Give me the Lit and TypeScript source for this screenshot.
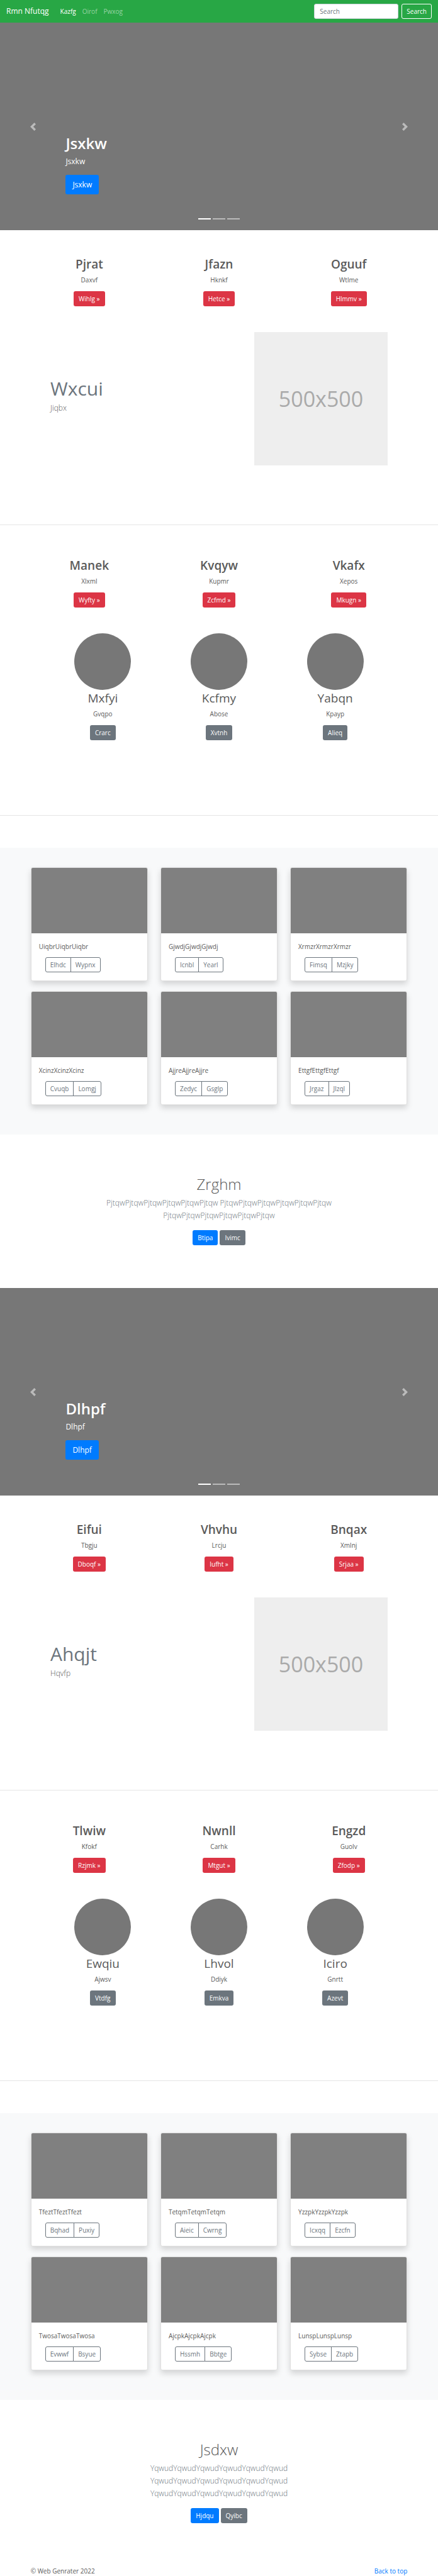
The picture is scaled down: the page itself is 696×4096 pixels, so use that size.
import { LitElement, html, css } from "lit";
import { customElement } from "lit/decorators.js";

interface Blurb {
  title: string;
  text: string;
  action: string;
}

interface Card {
  text: string;
  actions: [string, string];
}

interface Section {
  slide: string;
  features: Blurb[];
  featurette: { title: string; text: string };
  highlights: Blurb[];
  people: Blurb[];
  cards: Card[];
  callout: { title: string; text: string; primary: string; secondary: string };
}

const blurb = (title: string, text: string, action: string): Blurb => ({ title, text, action });
const card = (word: string, first: string, second: string): Card => ({
  text: word.repeat(3),
  actions: [first, second],
});
const passage = (word: string) => Array(3).fill(word.repeat(6)).join(" ");

const sections: Section[] = [
  {
    slide: "Jsxkw",
    features: [
      blurb("Pjrat", "Daxvf", "Wihlg »"),
      blurb("Jfazn", "Hknkf", "Hetce »"),
      blurb("Oguuf", "Wtlme", "Hlmmv »"),
    ],
    featurette: { title: "Wxcui", text: "Jiqbx" },
    highlights: [
      blurb("Manek", "Xlxml", "Wyfty »"),
      blurb("Kvqyw", "Kupmr", "Zcfmd »"),
      blurb("Vkafx", "Xepos", "Mkugn »"),
    ],
    people: [
      blurb("Mxfyi", "Gvqpo", "Crarc"),
      blurb("Kcfmy", "Abose", "Xvtnh"),
      blurb("Yabqn", "Kpayp", "Alieq"),
    ],
    cards: [
      card("Uiqbr", "Elhdc", "Wypnx"),
      card("Gjwdj", "Icnbl", "Yearl"),
      card("Xrmzr", "Fimsq", "Mzjky"),
      card("Xcinz", "Cvuqb", "Lomgj"),
      card("Ajjre", "Zedyc", "Gsglp"),
      card("Ettgf", "Jrgaz", "Jlzql"),
    ],
    callout: { title: "Zrghm", text: passage("Pjtqw"), primary: "Btipa", secondary: "Ivimc" },
  },
  {
    slide: "Dlhpf",
    features: [
      blurb("Eifui", "Tbgju", "Dboqf »"),
      blurb("Vhvhu", "Lrcju", "Iufht »"),
      blurb("Bnqax", "Xmlnj", "Srjaa »"),
    ],
    featurette: { title: "Ahqjt", text: "Hqvfp" },
    highlights: [
      blurb("Tlwiw", "Kfokf", "Rzjmk »"),
      blurb("Nwnll", "Carhk", "Mtgut »"),
      blurb("Engzd", "Guolv", "Zfodp »"),
    ],
    people: [
      blurb("Ewqiu", "Ajwsv", "Vtdfg"),
      blurb("Lhvol", "Ddiyk", "Emkva"),
      blurb("Iciro", "Gnrtt", "Azevt"),
    ],
    cards: [
      card("Tfezt", "Bqhad", "Puxiy"),
      card("Tetqm", "Aieic", "Cwrng"),
      card("Yzzpk", "Icxqq", "Ezcfn"),
      card("Twosa", "Evwwf", "Bsyue"),
      card("Ajcpk", "Hssmh", "Bbtge"),
      card("Lunsp", "Sybse", "Ztapb"),
    ],
    callout: { title: "Jsdxw", text: passage("Yqwud"), primary: "Hjdqu", secondary: "Qyibc" },
  },
];

@customElement("app-root")
export class AppRoot extends LitElement {
  static styles = css`
    :host {
      display: block;
      background: #fff;
      color: #5a5a5a;
      font: 400 10px/16px "Open Sans", "Noto Sans", sans-serif;
    }
    * {
      box-sizing: border-box;
    }
    h1, h2, p {
      margin: 0;
    }
    a {
      color: #007bff;
      text-decoration: none;
    }
    button, input {
      font: inherit;
    }

    .navbar {
      display: flex;
      align-items: center;
      height: 36px;
      padding: 0 10px;
      background: #28a745;
    }
    .brand {
      margin-right: 18px;
      color: #fff;
      font-size: 12px;
    }
    .links {
      display: flex;
      gap: 10px;
      flex: 1;
    }
    .links a {
      color: rgba(255, 255, 255, 0.5);
    }
    .links a.active {
      color: #fff;
    }
    .search {
      display: flex;
      gap: 5px;
    }
    .search input {
      width: 134px;
      height: 24px;
      padding: 0 8px;
      border: 1px solid #ced4da;
      border-radius: 3px;
      background: #fff;
      color: #495057;
    }
    .search input::placeholder {
      color: #6c757d;
      opacity: 1;
    }

    .btn {
      display: inline-block;
      padding: 3px 7px;
      border: 1px solid transparent;
      border-radius: 3px;
      background: transparent;
      color: #fff;
      white-space: nowrap;
    }
    .btn.light {
      border-color: #fff;
    }
    .btn.primary {
      background: #007bff;
    }
    .btn.secondary {
      background: #6c757d;
    }
    .btn.danger {
      background: #dc3545;
    }
    .btn.large {
      padding: 5px 10px;
      font-size: 12px;
      line-height: 19px;
    }

    .carousel {
      position: relative;
      display: flex;
      align-items: flex-end;
      height: 330px;
      padding: 0 15% 57px;
      background: #777;
      color: #fff;
      font-size: 12px;
      line-height: 20px;
    }
    .carousel h1 {
      margin-bottom: 3px;
      font-size: 24px;
      font-weight: 600;
      line-height: 32px;
    }
    .carousel p {
      margin-bottom: 11px;
    }
    .arrow {
      position: absolute;
      top: 0;
      bottom: 0;
      display: flex;
      align-items: center;
      justify-content: center;
      width: 15%;
      padding: 0;
      border: 0;
      background: none;
      color: #fff;
      opacity: 0.5;
    }
    .arrow svg {
      width: 13px;
      height: 13px;
      fill: currentColor;
    }
    .previous {
      left: 0;
    }
    .next {
      right: 0;
    }
    .indicators {
      position: absolute;
      right: 0;
      bottom: 17px;
      left: 0;
      display: flex;
      justify-content: center;
      gap: 3px;
    }
    .indicators button {
      width: 20px;
      height: 2px;
      padding: 0;
      border: 0;
      background: #fff;
      opacity: 0.5;
    }
    .indicators button.active {
      opacity: 1;
    }

    .columns {
      display: grid;
      grid-template-columns: repeat(3, 1fr);
      gap: 20px;
      padding: 0 7%;
      text-align: center;
    }
    .features {
      padding-top: 42px;
    }
    .highlights {
      padding-top: 52px;
    }
    .columns h2 {
      margin-bottom: 4px;
      font-size: 19px;
      font-weight: 600;
      line-height: 25px;
    }
    .columns p {
      margin-bottom: 10px;
    }
    .people {
      gap: 0;
      padding: 41px 71px 0;
    }
    .people h2 {
      font-weight: 400;
    }
    .avatar {
      width: 90px;
      height: 90px;
      margin: 0 auto 1px;
      border-radius: 50%;
      background: #777;
    }

    .featurette {
      display: grid;
      grid-template-columns: 1fr 212px;
      align-items: center;
      padding: 41px 80px 94px;
    }
    .featurette h2 {
      margin-bottom: 2px;
      color: #6c757d;
      font-size: 30px;
      font-weight: 400;
      line-height: 38px;
    }
    .lead {
      font-size: 12px;
      font-weight: 300;
      line-height: 20px;
    }
    .featurette .lead {
      margin-bottom: 10px;
    }
    .placeholder {
      display: flex;
      align-items: center;
      justify-content: center;
      aspect-ratio: 1;
      background: #eee;
      color: #aaa;
      font-size: 34px;
    }
    hr {
      height: 1px;
      margin: 0;
      border: 0;
      background: #e5e5e5;
    }
    .after-people {
      margin-top: 119px;
    }

    .album {
      margin-top: 51px;
      padding: 31px 7% 47px;
      background: #f8f9fa;
    }
    .cards {
      display: grid;
      grid-template-columns: repeat(3, 1fr);
      gap: 16px 20px;
    }
    .card {
      border: 1px solid #dfdfdf;
      border-radius: 3px;
      background: #fff;
      box-shadow: 0 5px 10px rgba(0, 0, 0, 0.15);
      overflow: hidden;
    }
    .thumb {
      height: 104px;
      background: #808080;
    }
    .body {
      padding: 13px 12px;
    }
    .body p {
      margin-bottom: 9px;
    }
    .group {
      display: flex;
      padding-left: 10px;
    }
    .group .btn {
      border-color: #6c757d;
      color: #6c757d;
    }
    .group .btn:first-child {
      border-radius: 3px 0 0 3px;
    }
    .group .btn:last-child {
      margin-left: -1px;
      border-radius: 0 3px 3px 0;
    }

    .callout {
      max-width: 412px;
      margin: 0 auto;
      padding: 62px 0 68px;
      text-align: center;
    }
    .callout h1 {
      margin-bottom: 3px;
      font-size: 24px;
      font-weight: 300;
      line-height: 34px;
    }
    .callout .lead {
      margin-bottom: 13px;
      color: #6c757d;
    }
    .pair {
      display: flex;
      justify-content: center;
      gap: 3px;
    }
    footer {
      display: flex;
      justify-content: space-between;
      padding: 0 7%;
    }
  `;

  private renderBlurb(item: Blurb, tone: string, avatar = false) {
    return html`
      <div>
        ${avatar ? html`<div class="avatar"></div>` : null}
        <h2>${item.title}</h2>
        <p>${item.text}</p>
        <a class="btn ${tone}" href="#">${item.action}</a>
      </div>
    `;
  }

  private renderCarousel(label: string) {
    return html`
      <section class="carousel">
        <div>
          <h1>${label}</h1>
          <p>${label}</p>
          <a class="btn primary large" href="#">${label}</a>
        </div>
        <button class="arrow previous" aria-label="Previous">
          <svg viewBox="0 0 8 8"><path d="M5.25 0l-4 4 4 4 1.5-1.5L4.25 4l2.5-2.5L5.25 0z" /></svg>
        </button>
        <button class="arrow next" aria-label="Next">
          <svg viewBox="0 0 8 8"><path d="M2.75 0l-1.5 1.5L3.75 4l-2.5 2.5L2.75 8l4-4-4-4z" /></svg>
        </button>
        <div class="indicators">
          <button class="active" aria-label="Slide 1"></button>
          <button aria-label="Slide 2"></button>
          <button aria-label="Slide 3"></button>
        </div>
      </section>
    `;
  }

  private renderSection(s: Section) {
    return html`
      ${this.renderCarousel(s.slide)}
      <section class="columns features">${s.features.map((f) => this.renderBlurb(f, "danger"))}</section>
      <section class="featurette">
        <div>
          <h2>${s.featurette.title}</h2>
          <p class="lead">${s.featurette.text}</p>
        </div>
        <div class="placeholder">500x500</div>
      </section>
      <hr />
      <section class="columns highlights">${s.highlights.map((f) => this.renderBlurb(f, "danger"))}</section>
      <section class="columns people">${s.people.map((f) => this.renderBlurb(f, "secondary", true))}</section>
      <hr class="after-people" />
      <section class="album">
        <div class="cards">
          ${s.cards.map(
            (c) => html`
              <article class="card">
                <div class="thumb"></div>
                <div class="body">
                  <p>${c.text}</p>
                  <div class="group">${c.actions.map((a) => html`<button class="btn">${a}</button>`)}</div>
                </div>
              </article>
            `,
          )}
        </div>
      </section>
      <section class="callout">
        <h1>${s.callout.title}</h1>
        <p class="lead">${s.callout.text}</p>
        <div class="pair">
          <a class="btn primary" href="#">${s.callout.primary}</a>
          <a class="btn secondary" href="#">${s.callout.secondary}</a>
        </div>
      </section>
    `;
  }

  render() {
    return html`
      <nav class="navbar">
        <a class="brand" href="#">Rmn Nfutqg</a>
        <div class="links">
          <a class="active" href="#">Kazfg</a>
          <a href="#">Oirof</a>
          <a href="#">Pwxog</a>
        </div>
        <form class="search">
          <input type="search" placeholder="Search" aria-label="Search" />
          <button class="btn light" type="button">Search</button>
        </form>
      </nav>
      <main>${sections.map((s) => this.renderSection(s))}</main>
      <footer>
        <span>© Web Genrater 2022</span>
        <a href="#">Back to top</a>
      </footer>
    `;
  }
}
